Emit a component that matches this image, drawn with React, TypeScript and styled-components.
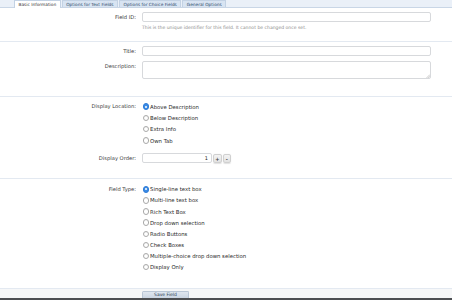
import React from "react";
import styled, { createGlobalStyle } from "styled-components";

const GlobalStyle = createGlobalStyle`
  html, body {
    margin: 0;
    padding: 0;
    background: #fff;
  }
  body {
    font-family: "DejaVu Sans", Verdana, sans-serif;
    color: #333;
  }
`;

const Page = styled.div`
  width: 452px;
  height: 300px;
  overflow: hidden;
  display: flex;
  flex-direction: column;
  background: #fff;
`;

const TabBar = styled.ul`
  display: flex;
  align-items: flex-end;
  gap: 1px;
  margin: 0;
  padding: 0 0 0 14px;
  list-style: none;
  height: 7px;
  flex-shrink: 0;
  background: #eaf0f8;
  border-bottom: 1px solid #c9d6e6;
`;

const Tab = styled.li<{ $active?: boolean }>`
  box-sizing: border-box;
  height: ${p => (p.$active ? "8px" : "7px")};
  margin-bottom: ${p => (p.$active ? "-1px" : "0")};
  padding: 0 3.5px;
  font-size: 4.3px;
  line-height: 7px;
  white-space: nowrap;
  color: ${p => (p.$active ? "#333" : "#2f4a6a")};
  background: ${p => (p.$active ? "#fff" : "#d8e4f2")};
  border: 1px solid #c3d2e4;
  border-bottom: none;
`;

const Section = styled.div<{ $top: number; $bottom: number; $gap?: number }>`
  display: flex;
  flex-direction: column;
  gap: ${p => p.$gap ?? 0}px;
  padding: ${p => p.$top}px 21px ${p => p.$bottom}px 0;
  border-bottom: 1px solid #e3e9f1;
  flex-shrink: 0;
`;

const Row = styled.div`
  display: grid;
  grid-template-columns: 136px 1fr;
  column-gap: 6px;
  align-items: start;
`;

const Label = styled.label<{ $line: number }>`
  text-align: right;
  font-size: 5.2px;
  line-height: ${p => p.$line}px;
  color: #3a3a3a;
  white-space: nowrap;
`;

const Controls = styled.div`
  display: flex;
  flex-direction: column;
  align-items: flex-start;
`;

const TextInput = styled.input`
  box-sizing: border-box;
  width: 100%;
  height: 10px;
  margin: 0;
  padding: 0 2px;
  font-family: inherit;
  font-size: 5px;
  border: 1px solid #d7d9dc;
  border-radius: 2px;
  background: #fff;
  outline: none;
`;

const TextAreaWrap = styled.div`
  position: relative;
  width: 100%;
  height: 18px;
`;

const TextArea = styled.textarea`
  box-sizing: border-box;
  display: block;
  width: 100%;
  height: 18px;
  margin: 0;
  padding: 1px 2px;
  font-family: inherit;
  font-size: 5px;
  border: 1px solid #d7d9dc;
  border-radius: 2px;
  resize: none;
  outline: none;
`;

const Grip = styled.svg`
  position: absolute;
  right: 1px;
  bottom: 1px;
  width: 4px;
  height: 4px;
`;

const Hint = styled.p`
  margin: 3px 0 0;
  font-size: 4.55px;
  line-height: 6px;
  color: #8d8d8d;
  white-space: nowrap;
`;

const RadioList = styled.div<{ $line: number }>`
  display: flex;
  flex-direction: column;
  --line: ${p => p.$line}px;
`;

const RadioOption = styled.label`
  display: flex;
  align-items: center;
  gap: 1px;
  height: var(--line);
  font-size: 5.35px;
  color: #2a2a2a;
  white-space: nowrap;
`;

const RadioDot = styled.span<{ $checked?: boolean }>`
  box-sizing: border-box;
  position: relative;
  width: 6.5px;
  height: 6.5px;
  margin-left: 0.5px;
  border-radius: 50%;
  flex-shrink: 0;
  background: ${p => (p.$checked ? "#3a8be6" : "#fff")};
  border: 0.6px solid ${p => (p.$checked ? "#2f7bd6" : "#a9a9a9")};
  box-shadow: ${p => (p.$checked ? "none" : "inset 0 0.5px 0.5px rgba(0,0,0,0.08)")};

  &::after {
    content: "";
    display: ${p => (p.$checked ? "block" : "none")};
    position: absolute;
    left: 50%;
    top: 50%;
    width: 2.2px;
    height: 2.2px;
    margin: -1.1px 0 0 -1.1px;
    border-radius: 50%;
    background: #fff;
  }
`;

const SpinRow = styled.div`
  display: flex;
  align-items: center;
  gap: 1px;
`;

const NumberInput = styled(TextInput)`
  width: 70px;
  text-align: right;
  padding-right: 3px;
  color: #222;
`;

const SpinButton = styled.button`
  box-sizing: border-box;
  width: 8.5px;
  height: 9px;
  margin: 0;
  padding: 0;
  font-family: inherit;
  font-size: 5px;
  font-weight: bold;
  line-height: 8px;
  color: #444;
  background: linear-gradient(#f4f4f4, #e2e2e2);
  border: 0.5px solid #d0d0d0;
  border-radius: 2px;
  box-shadow: 0 0.5px 1px rgba(0, 0, 0, 0.12);
`;

const Footer = styled.div`
  flex-shrink: 0;
  height: 9px;
  padding-left: 142px;
  display: flex;
  align-items: flex-end;
  background: #f6f7f8;
`;

const SaveButton = styled.button`
  box-sizing: border-box;
  width: 47px;
  height: 7px;
  margin: 0;
  padding: 0;
  font-family: inherit;
  font-size: 4.5px;
  line-height: 6px;
  color: #2c3e55;
  background: linear-gradient(#dfe6ef, #cbd5e2);
  border: 0.5px solid #b9c6d6;
  border-bottom: none;
  border-radius: 1.5px 1.5px 0 0;
`;

const BottomEdge = styled.div`
  flex-shrink: 0;
  height: 2px;
  background: #4d4f52;
`;

const locations = ["Above Description", "Below Description", "Extra Info", "Own Tab"];

const fieldTypes = [
  "Single-line text box",
  "Multi-line text box",
  "Rich Text Box",
  "Drop down selection",
  "Radio Buttons",
  "Check Boxes",
  "Multiple-choice drop down selection",
  "Display Only",
];

const tabs = ["Basic Information", "Options for Text Fields", "Options for Choice Fields", "General Options"];

const App = () => (
  <Page>
    <GlobalStyle />
    <TabBar>
      {tabs.map((t, i) => (
        <Tab key={t} $active={i === 0}>
          {t}
        </Tab>
      ))}
    </TabBar>

    <Section $top={4} $bottom={10}>
      <Row>
        <Label $line={10}>Field ID:</Label>
        <Controls>
          <TextInput />
          <Hint>This is the unique identifier for this field. It cannot be changed once set.</Hint>
        </Controls>
      </Row>
    </Section>

    <Section $top={4} $bottom={17} $gap={5}>
      <Row>
        <Label $line={10}>Title:</Label>
        <TextInput />
      </Row>
      <Row>
        <Label $line={10}>Description:</Label>
        <TextAreaWrap>
          <TextArea />
          <Grip viewBox="0 0 4 4">
            <path d="M4 0.5 L0.5 4 M4 2.2 L2.2 4" stroke="#9a9a9a" strokeWidth="0.5" />
          </Grip>
        </TextAreaWrap>
      </Row>
    </Section>

    <Section $top={4} $bottom={15} $gap={7}>
      <Row>
        <Label $line={11.3}>Display Location:</Label>
        <RadioList $line={11.3}>
          {locations.map((l, i) => (
            <RadioOption key={l}>
              <RadioDot $checked={i === 0} />
              {l}
            </RadioOption>
          ))}
        </RadioList>
      </Row>
      <Row>
        <Label $line={10}>Display Order:</Label>
        <SpinRow>
          <NumberInput defaultValue="1" />
          <SpinButton>+</SpinButton>
          <SpinButton>-</SpinButton>
        </SpinRow>
      </Row>
    </Section>

    <Section $top={4.5} $bottom={15.3}>
      <Row>
        <Label $line={11.15}>Field Type:</Label>
        <RadioList $line={11.15}>
          {fieldTypes.map((f, i) => (
            <RadioOption key={f}>
              <RadioDot $checked={i === 0} />
              {f}
            </RadioOption>
          ))}
        </RadioList>
      </Row>
    </Section>

    <Footer>
      <SaveButton>Save Field</SaveButton>
    </Footer>
    <BottomEdge />
  </Page>
);

export default App;
